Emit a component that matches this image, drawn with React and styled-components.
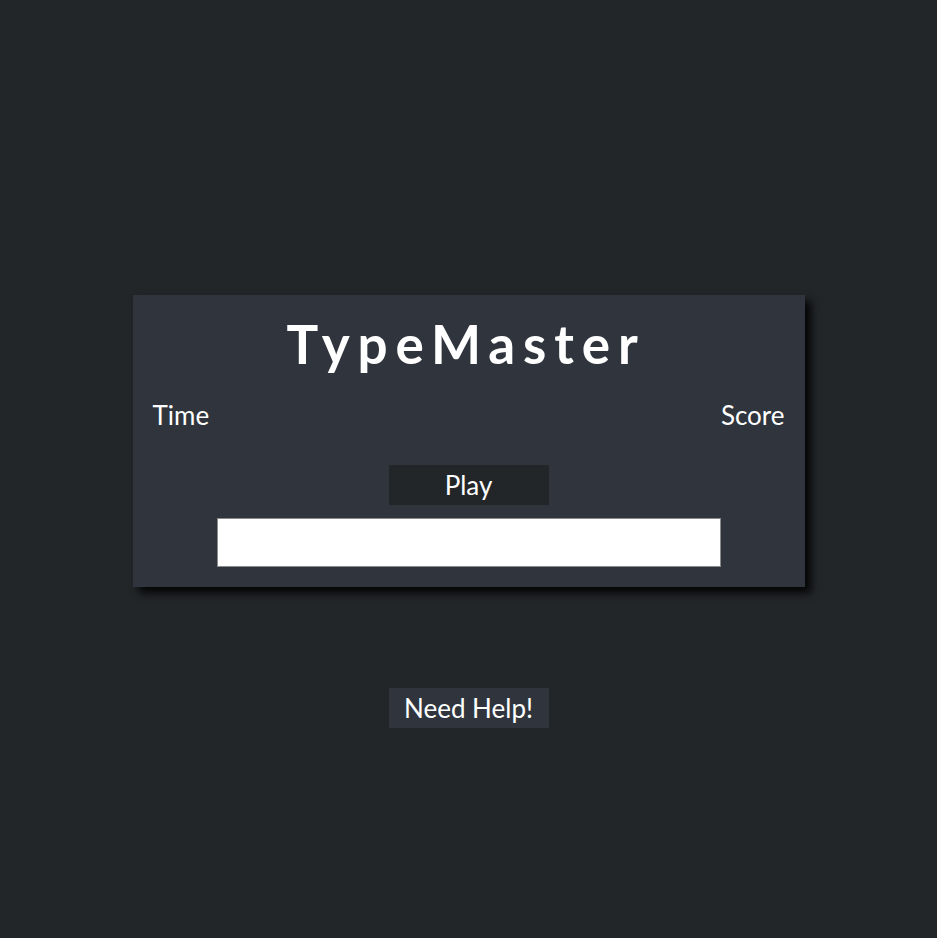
import React, { useState } from "react";
import styled, { createGlobalStyle } from "styled-components";

const GlobalStyle = createGlobalStyle`
  body {
    margin: 0;
    background-color: #222629;
    font-family: Lato, "Liberation Sans", sans-serif;
    color: #ffffff;
  }
`;

function App() {
  const [input, setInput] = useState("");

  return (
    <Page>
      <GlobalStyle />
      <Card>
        <Title>TypeMaster</Title>
        <StatsRow>
          <Stat>Time</Stat>
          <Stat>Score</Stat>
        </StatsRow>
        <Controls>
          <Button>Play</Button>
          <Input
            type="text"
            value={input}
            onChange={(e) => setInput(e.target.value)}
          />
        </Controls>
      </Card>
      <HelpButton>Need Help!</HelpButton>
    </Page>
  );
}

export default App;

const Page = styled.div`
  min-height: 100vh;
  box-sizing: border-box;
  padding-top: 295px;
  display: flex;
  flex-direction: column;
  align-items: center;
`;

const Card = styled.div`
  width: 672px;
  box-sizing: border-box;
  padding: 18px 20px 20px;
  background-color: #30353d;
  box-shadow: 6px 6px 8px rgba(0, 0, 0, 0.9);
  display: flex;
  flex-direction: column;
`;

const Title = styled.h1`
  margin: 0;
  padding-right: 5px;
  text-align: center;
  font-size: 53px;
  font-weight: 700;
  letter-spacing: 7.9px;
  line-height: 62px;
`;

const StatsRow = styled.div`
  display: flex;
  justify-content: space-between;
  margin-top: 25px;
`;

const Stat = styled.div`
  font-size: 26px;
  line-height: 31px;
`;

const Controls = styled.div`
  display: flex;
  flex-direction: column;
  align-items: center;
  gap: 13px;
  margin-top: 34px;
`;

const Button = styled.button`
  width: 160px;
  height: 40px;
  padding: 0;
  border: none;
  background-color: #222629;
  color: #ffffff;
  font-family: inherit;
  font-size: 26px;
  cursor: pointer;
`;

const Input = styled.input`
  width: 504px;
  height: 49px;
  box-sizing: border-box;
  border: 1px solid #8a8a8a;
  background-color: #ffffff;
  font-family: inherit;
  font-size: 20px;
  padding: 0 10px;
  outline: none;
`;

const HelpButton = styled(Button)`
  margin-top: 101px;
  background-color: #30353d;
`;
